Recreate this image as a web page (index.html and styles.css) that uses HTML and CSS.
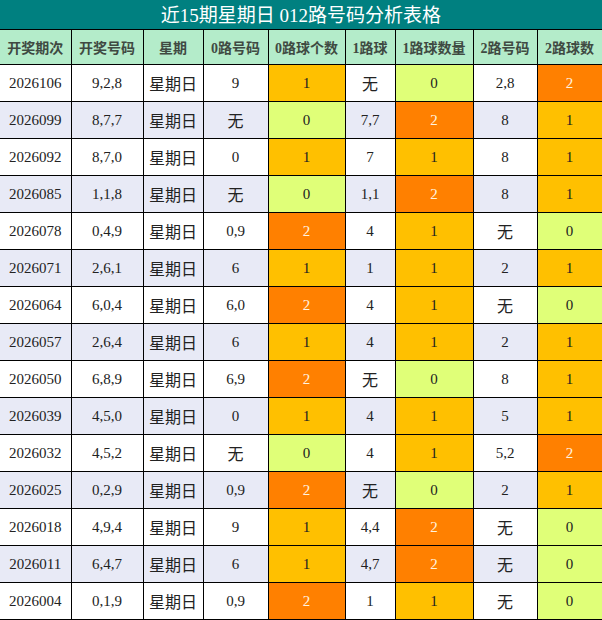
FILE: index.html
```html
<!DOCTYPE html>
<html lang="zh">
<head>
<meta charset="utf-8">
<link rel="stylesheet" href="styles.css">
</head>
<body>
<div class="wrap">
  <div class="title">近15期星期日 012路号码分析表格</div>
  <table class="grid">
    <colgroup>
      <col class="c1"><col class="c2"><col class="c3"><col class="c4"><col class="c5"><col class="c6"><col class="c7"><col class="c8"><col class="c9">
    </colgroup>
    <thead>
      <tr><th>开奖期次</th><th>开奖号码</th><th>星期</th><th>0路号码</th><th>0路球个数</th><th>1路球</th><th>1路球数量</th><th>2路号码</th><th>2路球数</th></tr>
    </thead>
    <tbody>
      <tr><td>2026106</td><td>9,2,8</td><td class="cj">星期日</td><td>9</td><td class="y">1</td><td class="cj">无</td><td class="g">0</td><td>2,8</td><td class="o">2</td></tr>
      <tr class="alt"><td>2026099</td><td>8,7,7</td><td class="cj">星期日</td><td class="cj">无</td><td class="g">0</td><td>7,7</td><td class="o">2</td><td>8</td><td class="y">1</td></tr>
      <tr><td>2026092</td><td>8,7,0</td><td class="cj">星期日</td><td>0</td><td class="y">1</td><td>7</td><td class="y">1</td><td>8</td><td class="y">1</td></tr>
      <tr class="alt"><td>2026085</td><td>1,1,8</td><td class="cj">星期日</td><td class="cj">无</td><td class="g">0</td><td>1,1</td><td class="o">2</td><td>8</td><td class="y">1</td></tr>
      <tr><td>2026078</td><td>0,4,9</td><td class="cj">星期日</td><td>0,9</td><td class="o">2</td><td>4</td><td class="y">1</td><td class="cj">无</td><td class="g">0</td></tr>
      <tr class="alt"><td>2026071</td><td>2,6,1</td><td class="cj">星期日</td><td>6</td><td class="y">1</td><td>1</td><td class="y">1</td><td>2</td><td class="y">1</td></tr>
      <tr><td>2026064</td><td>6,0,4</td><td class="cj">星期日</td><td>6,0</td><td class="o">2</td><td>4</td><td class="y">1</td><td class="cj">无</td><td class="g">0</td></tr>
      <tr class="alt"><td>2026057</td><td>2,6,4</td><td class="cj">星期日</td><td>6</td><td class="y">1</td><td>4</td><td class="y">1</td><td>2</td><td class="y">1</td></tr>
      <tr><td>2026050</td><td>6,8,9</td><td class="cj">星期日</td><td>6,9</td><td class="o">2</td><td class="cj">无</td><td class="g">0</td><td>8</td><td class="y">1</td></tr>
      <tr class="alt"><td>2026039</td><td>4,5,0</td><td class="cj">星期日</td><td>0</td><td class="y">1</td><td>4</td><td class="y">1</td><td>5</td><td class="y">1</td></tr>
      <tr><td>2026032</td><td>4,5,2</td><td class="cj">星期日</td><td class="cj">无</td><td class="g">0</td><td>4</td><td class="y">1</td><td>5,2</td><td class="o">2</td></tr>
      <tr class="alt"><td>2026025</td><td>0,2,9</td><td class="cj">星期日</td><td>0,9</td><td class="o">2</td><td class="cj">无</td><td class="g">0</td><td>2</td><td class="y">1</td></tr>
      <tr><td>2026018</td><td>4,9,4</td><td class="cj">星期日</td><td>9</td><td class="y">1</td><td>4,4</td><td class="o">2</td><td class="cj">无</td><td class="g">0</td></tr>
      <tr class="alt"><td>2026011</td><td>6,4,7</td><td class="cj">星期日</td><td>6</td><td class="y">1</td><td>4,7</td><td class="o">2</td><td class="cj">无</td><td class="g">0</td></tr>
      <tr><td>2026004</td><td>0,1,9</td><td class="cj">星期日</td><td>0,9</td><td class="o">2</td><td>1</td><td class="y">1</td><td class="cj">无</td><td class="g">0</td></tr>
    </tbody>
  </table>
</div>
</body>
</html>
```
FILE: styles.css
```css
html, body {
  margin: 0;
  padding: 0;
  background: #ffffff;
}
.wrap {
  width: 602px;
}
.title {
  height: 29px;
  line-height: 31px;
  background: #008080;
  color: #ffffff;
  text-align: center;
  font-family: "Liberation Serif", "Noto Sans CJK SC", serif;
  font-size: 19px;
  border-bottom: 1px solid #000;
}
.grid {
  width: 602px;
  table-layout: fixed;
  border-collapse: collapse;
  font-family: "Liberation Serif", "Noto Sans CJK SC", serif;
}
.c1 { width: 71px; }
.c2 { width: 72px; }
.c3 { width: 60px; }
.c4 { width: 65px; }
.c5 { width: 77px; }
.c6 { width: 50px; }
.c7 { width: 78px; }
.c8 { width: 64px; }
.c9 { width: 65px; }
.grid th,
.grid td {
  border: 1px solid #000;
  padding: 0;
  text-align: center;
  vertical-align: middle;
  overflow: hidden;
  white-space: nowrap;
}
.grid tr > :first-child { border-left: none; }
.grid thead tr:first-child th { border-top: none; }
.grid th {
  height: 34px;
  background: #b4ecca;
  color: #3f4a42;
  font-size: 14px;
  font-weight: bold;
}
.grid td {
  height: 36px;
  font-size: 15px;
  color: #222;
  background: #ffffff;
}
.grid tr.alt td {
  background: #e8eaf6;
}
.grid td.cj {
  font-family: "Noto Sans CJK SC", sans-serif;
  font-size: 16px;
}
.grid td.y, .grid tr.alt td.y { background: #ffc000; }
.grid td.g, .grid tr.alt td.g { background: #e0ff78; }
.grid td.o, .grid tr.alt td.o { background: #ff8000; color: #fff4e0; }
```
